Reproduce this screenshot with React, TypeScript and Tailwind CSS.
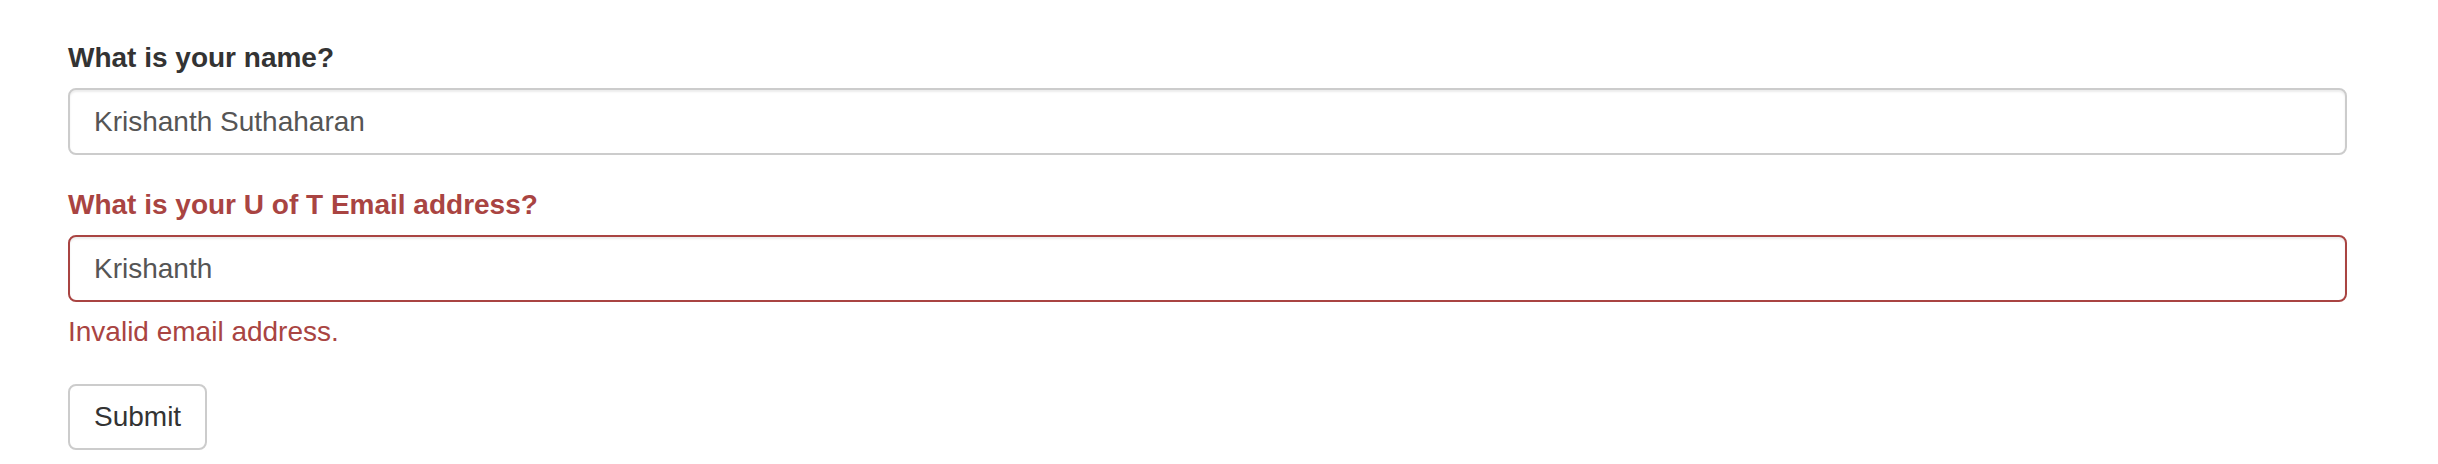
const inputBase =
  "block w-full h-[67px] px-[24px] py-[12px] text-[28px] leading-[40px] text-[#555] bg-white border-2 rounded-[8px] shadow-[inset_0_2px_2px_rgba(0,0,0,0.075)] outline-none font-['Liberation_Sans',Arial,sans-serif]";

const App = () => (
  <div className="h-[464px] overflow-hidden bg-white pt-[38px] pl-[68px] pr-[91px] font-['Liberation_Sans',Arial,sans-serif]">
    <form onSubmit={(e) => e.preventDefault()}>
      <div className="mb-[30px]">
        <label htmlFor="name" className="block mb-[10px] text-[28px] leading-[40px] font-bold text-[#333]">
          What is your name?
        </label>
        <input id="name" type="text" readOnly defaultValue="Krishanth Suthaharan" className={`${inputBase} border-[#ccc]`} />
      </div>

      <div className="mb-[32px]">
        <label htmlFor="email" className="block mb-[10px] text-[28px] leading-[40px] font-bold text-[#a94442]">
          What is your U of T Email address?
        </label>
        <input id="email" type="text" readOnly defaultValue="Krishanth" className={`${inputBase} border-[#a94442]`} />
        <p className="mt-[10px] text-[28px] leading-[40px] text-[#a94442]">Invalid email address.</p>
      </div>

      <button
        type="submit"
        className="block h-[66px] px-[24px] bg-white border-2 border-[#ccc] rounded-[8px] text-[28px] leading-[40px] text-[#333] font-['Liberation_Sans',Arial,sans-serif]"
      >
        Submit
      </button>
    </form>
  </div>
);

export default App;
